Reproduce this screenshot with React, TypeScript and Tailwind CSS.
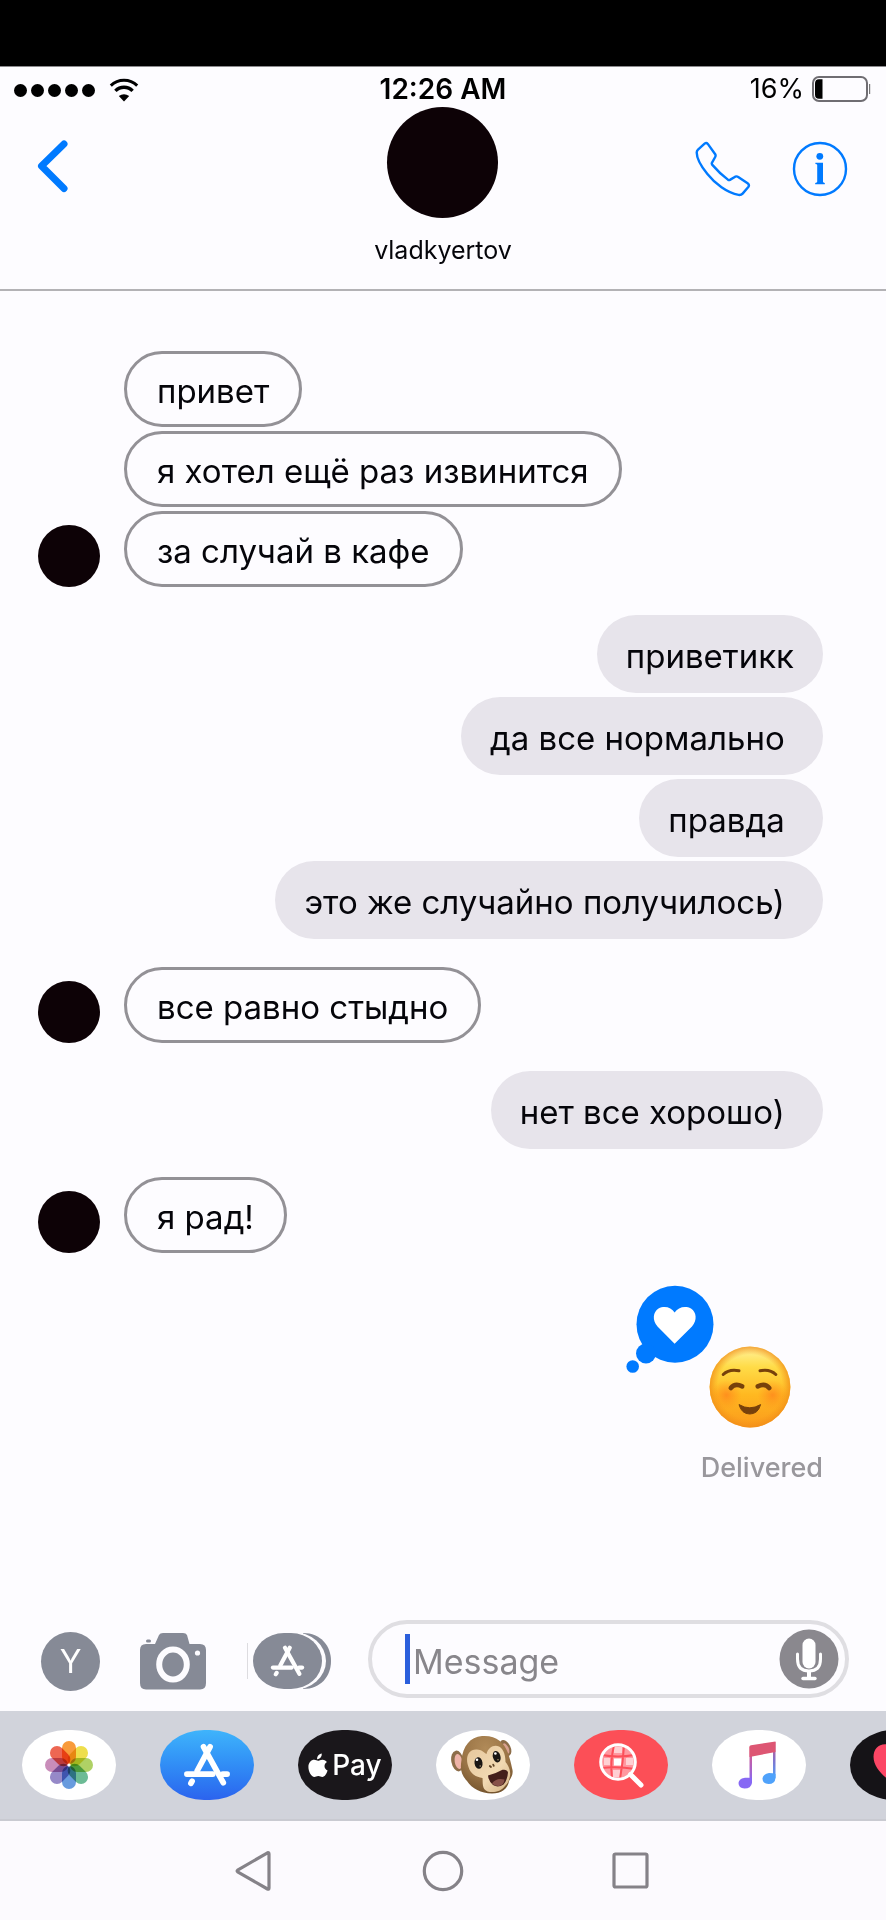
import type { ReactNode } from "react";

function Wifi() {
  return (
    <svg viewBox="0 0 30 24" className="h-6 w-[30px]" fill="none" aria-hidden="true">
      <path d="M1.8 7.6 A19 19 0 0 1 28.2 7.6" stroke="#000" strokeWidth="3" />
      <path d="M6.4 12.9 A12 12 0 0 1 23.6 12.9" stroke="#000" strokeWidth="3.4" />
      <path d="M15 23.4 L9.8 18 Q15 14.6 20.2 18 Z" fill="#000" />
    </svg>
  );
}

function Battery() {
  return (
    <svg viewBox="0 0 60 26" className="h-[26px] w-[60px]" fill="none" aria-hidden="true">
      <rect x="1" y="1" width="54" height="24" rx="6" stroke="#6f6d72" strokeWidth="2" />
      <path d="M7 3.2 H10.5 V22.8 H7 Q3 22.8 3 18.5 V7.5 Q3 3.2 7 3.2Z" fill="#000" />
      <path d="M57.6 8 V18" stroke="#777" strokeWidth="1.2" />
    </svg>
  );
}

function Phone() {
  return (
    <svg viewBox="0 0 56 56" className="size-14" fill="none" stroke="#007aff" strokeWidth="2.4" strokeLinejoin="round" aria-hidden="true">
      <path d="M3 8.6 L9.6 2.6 Q11.4 1.2 12.8 2.9 L20.2 13.2 Q21 14.6 20.2 16 L16.9 21.9 Q16.5 22.8 17.1 23.6 Q24.8 32.6 33.2 38.9 Q34 39.4 34.9 38.9 L40.2 35.7 Q41.8 35 43.2 35.9 L52.6 42.3 Q54.8 44 53.3 46 L47.6 52.6 Q46.2 54.2 43.6 53.9 C32 51.8 20 42.6 12.4 33 C5.6 24.6 1.7 16.6 1.7 11.4 Q1.7 9.8 3 8.6 Z" />
    </svg>
  );
}

function Info() {
  return (
    <svg viewBox="0 0 56 56" className="size-14" fill="none" aria-hidden="true">
      <circle cx="28" cy="28" r="26" stroke="#007aff" strokeWidth="2.4" />
      <circle cx="27.8" cy="15.3" r="3.4" fill="#007aff" />
      <path d="M23.4 21.8 H31 V40.8 Q31 41.8 32.8 42 V43.2 H23.2 V42 Q25.2 41.8 25.2 40.8 V24 Q25.2 23.2 23.4 23 Z" fill="#007aff" />
    </svg>
  );
}

function AppStoreMark({ className }: { className: string }) {
  return (
    <svg viewBox="0 0 50 46" className={className} fill="none" stroke="#fff" strokeWidth="6" strokeLinecap="round" aria-hidden="true">
      <path d="M28.2 4 L14.8 29" />
      <path d="M4 32.5 H31" />
      <path d="M41.5 32.5 H46" />
      <path d="M9.4 40 L8.2 42" />
      <path d="M21.4 4 L42 41.5" />
    </svg>
  );
}

function Camera() {
  return (
    <svg viewBox="0 0 68 58" className="h-[58px] w-[68px]" aria-hidden="true">
      <path d="M7 12 H16 L20 3 Q21 1 24 1 H44 Q47 1 48 3 L50.5 12 H61 Q67 12 67 18 V51 Q67 57.5 61 57.5 H7 Q1 57.5 1 51 V18 Q1 12 7 12Z" fill="#868a96" />
      <rect x="7" y="7.5" width="5" height="3" rx="1.5" fill="#868a96" />
      <ellipse cx="34" cy="32.5" rx="13.8" ry="15" fill="none" stroke="#fdfcff" strokeWidth="6" />
      <circle cx="58.5" cy="21" r="2.6" fill="#fdfcff" />
    </svg>
  );
}

function AppDrawer() {
  return (
    <svg viewBox="0 0 78 58" className="col-start-1 row-start-1 h-[58px] w-[78px]" aria-hidden="true">
      <path d="M50 1 C68 1 78 14 78 29 S68 57 50 57 Z" fill="#868a96" />
      <rect x="0" y="0" width="73" height="58" rx="33" ry="29" fill="#fdfcff" />
      <rect x="0" y="1" width="69" height="56" rx="31" ry="28" fill="#868a96" />
    </svg>
  );
}

function Mic() {
  return (
    <svg viewBox="0 0 60 60" className="size-[60px]" fill="none" stroke="#fff" strokeLinecap="round" aria-hidden="true">
      <circle cx="30" cy="30" r="29.5" fill="#8a888e" stroke="none" />
      <rect x="23.5" y="9.5" width="13" height="30" rx="6.5" fill="#fff" stroke="none" />
      <path d="M18.5 25 V30 Q18.5 42 30 42 T41.5 30 V25" strokeWidth="3" />
      <path d="M30 43 V49" strokeWidth="4" />
      <path d="M24 49.5 H36" strokeWidth="3.4" />
    </svg>
  );
}

function LoveReaction() {
  return (
    <svg viewBox="0 0 90 90" className="absolute -top-[61px] -left-[83px] size-[90px]" aria-hidden="true">
      <g fill="#007aff">
        <circle cx="49" cy="39.3" r="38.5" />
        <circle cx="20" cy="68.5" r="10" />
        <circle cx="6.7" cy="81.5" r="6.3" />
      </g>
      <path d="M48.6 58.8 L31.5 41.5 C26 35.5 27 27 32.5 23.6 C38.5 20.4 45.5 22.5 48.6 27.5 C52 22.5 59 20.4 65 23.6 C70.5 27 71.5 35.5 66 41.5 Z" fill="#fff" />
    </svg>
  );
}

function SmilingFace() {
  return (
    <svg viewBox="0 0 82 82" className="size-[82px]" role="img" aria-label="Smiling face">
      <defs>
        <linearGradient id="face" x1="0" y1="0" x2="0" y2="1">
          <stop offset="0" stopColor="#fff3a0" />
          <stop offset="0.25" stopColor="#ffdc48" />
          <stop offset="0.6" stopColor="#ffb820" />
          <stop offset="1" stopColor="#fb9a1c" />
        </linearGradient>
        <radialGradient id="rim">
          <stop offset="0.8" stopColor="#f5931a" stopOpacity="0" />
          <stop offset="1" stopColor="#f08c18" stopOpacity="0.75" />
        </radialGradient>
        <radialGradient id="blush">
          <stop offset="0" stopColor="#ff7a1c" stopOpacity="0.65" />
          <stop offset="1" stopColor="#ff8a1c" stopOpacity="0" />
        </radialGradient>
      </defs>
      <circle cx="41" cy="41" r="40.4" fill="url(#face)" />
      <circle cx="41" cy="41" r="40.4" fill="url(#rim)" />
      <circle cx="17.5" cy="49" r="15" fill="url(#blush)" />
      <circle cx="63.5" cy="49" r="15" fill="url(#blush)" />
      <g fill="none" stroke="#77410b" strokeLinecap="round">
        <path d="M14.2 28.5 Q20 22.8 30 24.8" strokeWidth="3" />
        <path d="M66.8 28.5 Q61 22.8 51 24.8" strokeWidth="3" />
        <path d="M21.8 42 Q26 36.8 33.2 40.4" strokeWidth="4.6" />
        <path d="M60.2 42 Q56 36.8 48.8 40.4" strokeWidth="4.6" />
      </g>
      <path d="M30 58.6 Q40.8 65 51.6 58.6 Q49 68 40.8 68 T30 58.6Z" fill="#77410b" stroke="#77410b" strokeLinejoin="round" />
    </svg>
  );
}

const petals = [
  { angle: 0, color: "#f8922a" },
  { angle: 45, color: "#eddc3c" },
  { angle: 90, color: "#a8cd58" },
  { angle: 135, color: "#5fb58c" },
  { angle: 180, color: "#5b93dc" },
  { angle: 225, color: "#8d7fc4" },
  { angle: 270, color: "#c583b4" },
  { angle: 315, color: "#ec5a44" },
];

function PhotosMark() {
  return (
    <svg viewBox="0 0 48 48" className="size-12" aria-hidden="true">
      <g style={{ isolation: "isolate" }}>
        {petals.map((p) => (
          <rect key={p.angle} x="17" y="0" width="14" height="23" rx="7" fill={p.color} opacity="0.92" transform={`rotate(${p.angle} 24 24)`} style={{ mixBlendMode: "multiply" }} />
        ))}
      </g>
      <circle cx="24" cy="24" r="1.6" fill="#fff" />
    </svg>
  );
}

function AppleMark() {
  return (
    <svg viewBox="0 0 20 25" className="h-[25px] w-5" fill="#fff" aria-hidden="true">
      <path d="M13.8 0.5 Q14 3 12.4 4.8 Q10.9 6.4 9 6.2 Q8.9 3.9 10.4 2.2 Q11.9 0.6 13.8 0.5Z" />
      <path d="M10 7.8 C11.3 7.8 12.5 6.6 14.6 6.7 C16.5 6.8 18 7.7 18.9 9 C15.4 11.2 15.9 16 19.6 17.5 C18.7 20.2 16.9 24 14.3 24 C12.8 24 12.2 23.1 10.3 23.1 C8.4 23.1 7.8 24 6.4 24 C3.4 24 0.4 18.7 0.4 14 C0.4 9.4 3.3 6.8 6.2 6.8 C7.9 6.8 9.1 7.8 10 7.8Z" />
    </svg>
  );
}

function Monkey() {
  return (
    <svg viewBox="0 0 66 60" className="h-[60px] w-[66px]" aria-hidden="true">
      <defs>
        <radialGradient id="fur" cx="48%" cy="22%" r="80%">
          <stop offset="0" stopColor="#b08a58" />
          <stop offset="0.6" stopColor="#997345" />
          <stop offset="1" stopColor="#73532d" />
        </radialGradient>
        <linearGradient id="skin" x1="0" y1="0" x2="1" y2="1">
          <stop offset="0" stopColor="#e6c79c" />
          <stop offset="0.6" stopColor="#f1d9b2" />
          <stop offset="1" stopColor="#d3b284" />
        </linearGradient>
      </defs>
      <ellipse cx="7.5" cy="26" rx="6.2" ry="10.5" fill="#8d6d49" transform="rotate(-10 7.5 26)" />
      <ellipse cx="8.5" cy="26.5" rx="3.8" ry="7.6" fill="#eeb3a8" transform="rotate(-10 8.5 26.5)" />
      <ellipse cx="55.5" cy="13" rx="5" ry="8.6" fill="#8d6d49" transform="rotate(-26 55.5 13)" />
      <ellipse cx="56" cy="13.5" rx="2.6" ry="5.6" fill="#d9a190" transform="rotate(-26 56 13.5)" />
      <path d="M32 1 C46 0 54 7 58 18 C60 24 61 28 62 33 C64 39 61 43 59 46 C58 54 51 58.5 42 58.5 C31 58 22 54 17 46 C11 40 10 34 11.5 25 C13 11 20 2 32 1Z" fill="url(#fur)" />
      <path d="M18.5 32 C15 23 18 14.5 26 14.5 C31 14 34 17.5 36.5 19 C38 12.5 44 9 49 11.5 C54.5 14.5 55.5 22 55.5 27 C58 30 61 35 60 41 C59 46 58 48 55 51 C51 57 43 58 37.5 56.5 C31.5 54 33 47 32.5 43 C26 42 20.5 39 18.5 32Z" fill="url(#skin)" />
      <ellipse cx="28.5" cy="28" rx="4" ry="5.8" fill="#1a1613" transform="rotate(-8 28.5 28)" />
      <ellipse cx="46.7" cy="21.7" rx="3.8" ry="5.8" fill="#1a1613" transform="rotate(-16 46.7 21.7)" />
      <circle cx="27" cy="24.8" r="1.3" fill="#fff" />
      <circle cx="45.4" cy="18.5" r="1.3" fill="#fff" />
      <circle cx="30.2" cy="31" r="0.8" fill="#a8906a" />
      <circle cx="48" cy="24.8" r="0.8" fill="#a8906a" />
      <path d="M39.8 31 L41 32 M43.2 29.6 L43.8 30.8" stroke="#5f4426" strokeWidth="1.8" strokeLinecap="round" />
      <path d="M38 40.5 Q46 38.5 52.5 34.8 Q57 34 58 37.5 Q57.5 45 53.5 49.5 Q48 53 43 50 Q38.5 46 38 40.5Z" fill="#431f1b" />
      <path d="M42 48.5 Q46 42.5 54.5 44.5 Q54 50 49 51 Q45 51.5 42 48.5Z" fill="#875149" />
    </svg>
  );
}

function ImageSearch() {
  return (
    <svg viewBox="0 0 46 46" className="size-[46px]" fill="none" aria-hidden="true">
      <circle cx="20" cy="20" r="17" fill="#ff98a0" />
      <rect x="16" y="16.5" width="7.5" height="7" fill="#fff" />
      <path d="M16 5 H24 V11 H16Z M6 16 H12 V23 H6Z M28 16 H35 V23 H28Z M15 28 H22 V35 H15Z" fill="#ffd0d3" />
      <path d="M16 3 Q12 20 14 36 M26 4 Q25 20 22 37 M4 13 Q20 16 36 13 M3 26 Q20 24 37 27" stroke="#fc4f59" strokeWidth="2" />
      <circle cx="20" cy="20" r="17.3" stroke="#fff" strokeWidth="3" />
      <path d="M32.5 32.5 L43 43" stroke="#fff" strokeWidth="5" strokeLinecap="round" />
    </svg>
  );
}

function MusicMark() {
  return (
    <svg viewBox="0 0 38 48" className="h-12 w-[38px]" aria-hidden="true">
      <defs>
        <linearGradient id="leftStem" x1="0" y1="0" x2="0" y2="1">
          <stop offset="0" stopColor="#e4587c" />
          <stop offset="1" stopColor="#8768f4" />
        </linearGradient>
        <linearGradient id="rightStem" x1="0" y1="0" x2="0" y2="1">
          <stop offset="0" stopColor="#d5587f" />
          <stop offset="0.5" stopColor="#8272cc" />
          <stop offset="1" stopColor="#4fa2fb" />
        </linearGradient>
      </defs>
      <path d="M11.5 6 H14 V41 H11.5Z" fill="url(#leftStem)" />
      <path d="M35 1 H37.5 V37 H35Z" fill="url(#rightStem)" />
      <path d="M11.5 5.5 Q11.5 4.5 13 4.2 L37.5 0.5 V11 L11.5 16Z" fill="#dd5673" />
      <path d="M14 37 V42 Q13 47.5 6.5 47.5 Q0.5 47 0.5 42 Q1 37.5 7 36.8 Q12 36.5 14 37Z" fill="#8768f4" />
      <path d="M37.5 33 V37 Q37 43 30.5 43 Q24.5 42.5 24.5 37.5 Q25 33 31 32 Q35 32 37.5 33Z" fill="#4fa2fb" />
    </svg>
  );
}

function HeartMark() {
  return (
    <svg viewBox="0 0 46 42" className="h-11 w-12" aria-hidden="true">
      <path d="M23 41 C12 34 0.5 24 0.5 13 C0.5 6 5 1 11.5 1 C17 1 21 4 23 8 C25 4 29 1 34.5 1 C41 1 45.5 6 45.5 13 C45.5 24 34 34 23 41Z" fill="#fc4665" />
    </svg>
  );
}

function Bubble({ side, children }: { side: "in" | "out"; children: string }) {
  const look =
    side === "in"
      ? "h-[76px] border-[3px] border-[#939196] bg-[#fdfcff] px-[30px] pt-1"
      : "h-[78px] bg-[#e7e4eb] px-[29px] pt-1";
  return (
    <p className={`flex items-center whitespace-pre rounded-full text-[33px] leading-10 ${look}`}>{children}</p>
  );
}

function Incoming({ messages }: { messages: string[] }) {
  return (
    <div className="flex items-end gap-6">
      <span className="size-[62px] shrink-0 rounded-full bg-[#0d0206]" />
      <div className="flex flex-col items-start gap-1">
        {messages.map((m) => (
          <Bubble key={m} side="in">{m}</Bubble>
        ))}
      </div>
    </div>
  );
}

function Outgoing({ messages }: { messages: string[] }) {
  return (
    <div className="flex flex-col items-end gap-1 pr-[63px]">
      {messages.map((m) => (
        <Bubble key={m} side="out">{m}</Bubble>
      ))}
    </div>
  );
}

function AppPill({ label, look, children }: { label: string; look: string; children: ReactNode }) {
  return (
    <button type="button" aria-label={label} className={`flex h-[70px] w-[94px] shrink-0 items-center justify-center [border-radius:44px_/_35px] ${look}`}>
      {children}
    </button>
  );
}

export default function App() {
  return (
    <div className="flex min-h-screen flex-col overflow-hidden bg-[#fdfcff] font-[Inter,'Liberation_Sans',sans-serif] text-[#05050a]">
      <div className="h-[67px] border-b border-[#8b8a8d] bg-black" />

      <header className="border-b-2 border-[#b3b2b5]">
        <div className="grid h-10 grid-cols-[1fr_auto_1fr] items-center px-[14px] pt-1 text-[28px] leading-8 text-black">
          <div className="flex items-center pt-0.5">
            <div className="flex gap-1">
              {[0, 1, 2, 3, 4].map((i) => (
                <span key={i} className="size-[13px] rounded-full bg-black" />
              ))}
            </div>
            <span className="ml-[14px]"><Wifi /></span>
          </div>
          <span className="font-semibold">12:26 AM</span>
          <div className="flex items-center justify-end gap-2">
            <span className="text-[27px]">16%</span>
            <Battery />
          </div>
        </div>
        <div className="grid grid-cols-[1fr_auto_1fr] items-start px-[38px]">
          <button type="button" aria-label="Back" className="mt-8 justify-self-start">
            <svg viewBox="4 0 28 54" className="h-[54px] w-7 overflow-visible" fill="none" stroke="#007aff" strokeWidth="7" strokeLinecap="round" strokeLinejoin="round" aria-hidden="true">
              <path d="M30 5 L7.5 27 L30 49.5" />
            </svg>
          </button>
          <div className="flex h-[182px] flex-col items-center">
            <span className="size-[111px] rounded-full bg-[#0d0206]" />
            <h1 className="mt-4 text-[25px] leading-8">vladkyertov</h1>
          </div>
          <div className="mt-[34px] flex gap-[41px] justify-self-end">
            <button type="button" aria-label="Call"><Phone /></button>
            <button type="button" aria-label="Details"><Info /></button>
          </div>
        </div>
      </header>

      <main className="flex grow flex-col gap-7 pl-[38px] pt-[60px]">
        <Incoming messages={["привет", "я хотел ещё раз извинится", "за случай в кафе"]} />
        <Outgoing messages={["приветикк", "да все нормально ", "правда ", "это же случайно получилось) "]} />
        <Incoming messages={["все равно стыдно"]} />
        <Outgoing messages={["нет все хорошо) "]} />
        <Incoming messages={["я рад!"]} />
        <div className="mt-[65px] flex flex-col items-end pr-[63px]">
          <div className="relative mr-8">
            <LoveReaction />
            <SmilingFace />
          </div>
          <span className="mt-6 text-[27px] font-medium leading-8 text-[#99979c]">Delivered</span>
        </div>
      </main>

      <form className="flex items-center pb-[13px] pl-[41px] pr-[37px]" onSubmit={(e) => e.preventDefault()}>
        <div className="flex shrink-0 items-center pt-1">
          <button type="button" aria-label="Account" className="size-[59px] rounded-full bg-[#868a96] text-[32px] leading-[59px] text-white">Y</button>
          <button type="button" aria-label="Camera" className="ml-[39px]"><Camera /></button>
          <span className="ml-10 h-9 w-px bg-[#dddce0]" />
          <button type="button" aria-label="Apps" className="ml-[5px] grid items-center">
            <AppDrawer />
            <span className="col-start-1 row-start-1 ml-[17px]"><AppStoreMark className="h-8 w-[35px]" /></span>
          </button>
        </div>
        <div className="ml-[37px] flex h-[78px] min-w-0 grow items-center rounded-full border-4 border-[#dfdee2] bg-[#fdfcff] pl-[33px] pr-[6px]">
          <span className="h-[50px] w-[5px] shrink-0 bg-[#2b5fdc]" />
          <input aria-label="Message" placeholder="Message" className="min-w-0 grow bg-transparent pl-[3px] pt-1.5 text-[34px] leading-10 outline-none placeholder:text-[#88868b]" />
          <button type="button" aria-label="Dictate" className="shrink-0"><Mic /></button>
        </div>
      </form>

      <nav aria-label="iMessage apps" className="flex h-[110px] items-center gap-11 overflow-hidden border-b-2 border-[#c9cad1] bg-[#d1d3db] pl-[22px]">
        <AppPill label="Photos" look="bg-white"><PhotosMark /></AppPill>
        <AppPill label="App Store" look="bg-linear-to-b from-[#3fb4fb] to-[#2c63ee]"><AppStoreMark className="h-11 w-12" /></AppPill>
        <AppPill label="Apple Pay" look="gap-1 bg-[#1a171b] text-[28px] font-medium leading-8 text-white">
          <AppleMark />
          <span>Pay</span>
        </AppPill>
        <AppPill label="Animoji" look="bg-white"><Monkey /></AppPill>
        <AppPill label="Images" look="bg-[#fc4f57]"><ImageSearch /></AppPill>
        <AppPill label="Music" look="bg-white pr-1"><MusicMark /></AppPill>
        <AppPill label="Digital Touch" look="bg-[#151317]"><HeartMark /></AppPill>
      </nav>

      <footer className="flex h-[99px] items-center justify-center gap-36 bg-[#fcfafe]">
        {[
          <path key="b" d="M4.6 21.2 L34.5 3.8 Q36 3.2 36 5 V39 Q36 40.8 34.5 40 L4.6 22.8 Q3.6 22 4.6 21.2Z" />,
          <circle key="h" cx="22" cy="22" r="18.7" />,
          <rect key="r" x="5" y="5" width="33" height="33" rx="1.5" />,
        ].map((shape, i) => (
          <button key={i} type="button" aria-label={["System back", "Home", "Recent apps"][i]}>
            <svg viewBox="0 0 44 44" className="size-11" fill="none" stroke="#858288" strokeWidth="3.2" strokeLinejoin="round" aria-hidden="true">{shape}</svg>
          </button>
        ))}
      </footer>
    </div>
  );
}
